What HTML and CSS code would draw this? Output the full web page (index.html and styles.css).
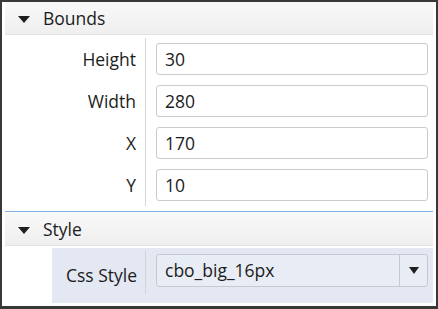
FILE: index.html
```html
<!DOCTYPE html>
<html lang="en">
<head>
    <meta charset="UTF-8">
    <title>Properties</title>
    <link rel="stylesheet" href="styles.css">
</head>
<body>

    <div class="panel">

        <!-- Bounds -->
        <div class="group">
            <div class="group-head"><span class="arrow"></span>Bounds</div>
            <div class="rows">
                <div class="row">
                    <label>Height</label>
                    <div class="field"><input type="text" value="30"></div>
                </div>
                <div class="row">
                    <label>Width</label>
                    <div class="field"><input type="text" value="280"></div>
                </div>
                <div class="row">
                    <label>X</label>
                    <div class="field"><input type="text" value="170"></div>
                </div>
                <div class="row">
                    <label>Y</label>
                    <div class="field"><input type="text" value="10"></div>
                </div>
            </div>
        </div>

        <!-- Style -->
        <div class="group style-group">
            <div class="group-head"><span class="arrow"></span>Style</div>
            <div class="rows">
                <div class="row selected">
                    <label>Css Style</label>
                    <div class="field">
                        <div class="combo">
                            <span class="combo-text">cbo_big_16px</span>
                            <span class="combo-btn"><span class="combo-arrow"></span></span>
                        </div>
                    </div>
                </div>
            </div>
        </div>

    </div>

</body>
</html>
```

FILE: styles.css
```css
* {
    box-sizing: border-box;
}

body {
    margin: 0;
    font-family: "Open Sans", "Noto Sans", sans-serif;
    color: #1c1c1c;
    background: #fff;
}

.panel {
    width: 438px;
    height: 309px;
    border: 2px solid #383838;
    border-bottom-width: 3px;
    padding: 0 3px;
    overflow: hidden;
}

/* Group header */
.group-head {
    height: 33px;
    display: flex;
    align-items: center;
    padding-left: 13px;
    font-size: 17.5px;
    background: linear-gradient(#f8f8f8, #efefef);
    border-bottom: 1px solid #e2e2e2;
}

.arrow {
    width: 0;
    height: 0;
    border-left: 6px solid transparent;
    border-right: 6px solid transparent;
    border-top: 7px solid #1e1e1e;
    margin-right: 13px;
    margin-top: 2px;
}

.rows {
    padding: 3px 0 2px 0;
}

.row {
    display: flex;
    height: 42px;
}

.row label {
    width: 141px;
    padding-right: 9px;
    text-align: right;
    font-size: 17.5px;
    line-height: 42px;
    border-right: 1px solid #d6d6d6;
}

.field {
    flex: 1;
    padding: 5px 5px 5px 10px;
}

input {
    width: 100%;
    height: 32px;
    border: 1px solid #cbcbcb;
    border-radius: 3px;
    padding: 0 8px;
    font-family: inherit;
    font-size: 17.5px;
    color: #1c1c1c;
    background: #fff;
}

/* Style group */
.style-group {
    border-top: 1px solid #86b2e2;
    margin-top: 3px;
    padding-top: 1px;
}

.style-group .rows {
    padding: 2px 0 0 47px;
}

.row.selected {
    background: #e3e8f3;
    height: 55px;
}

.row.selected label {
    width: 94px;
    line-height: 55px;
    border-right: none;
    position: relative;
}

.row.selected label::after {
    content: '';
    position: absolute;
    right: 0;
    top: 3px;
    bottom: 9px;
    width: 1px;
    background: #cfd3da;
}

.row.selected .field {
    padding-top: 6px;
}

.combo {
    display: flex;
    height: 33px;
    border: 1px solid #c6c9cf;
    border-radius: 3px;
    background: #e8ecf4;
}

.combo-text {
    flex: 1;
    padding-left: 8px;
    font-size: 17.5px;
    line-height: 31px;
}

.combo-btn {
    width: 28px;
    border-left: 1px solid #c6c9cf;
    display: flex;
    align-items: center;
    justify-content: center;
}

.combo-arrow {
    width: 0;
    height: 0;
    border-left: 5px solid transparent;
    border-right: 5px solid transparent;
    border-top: 7px solid #1e1e1e;
}
```
